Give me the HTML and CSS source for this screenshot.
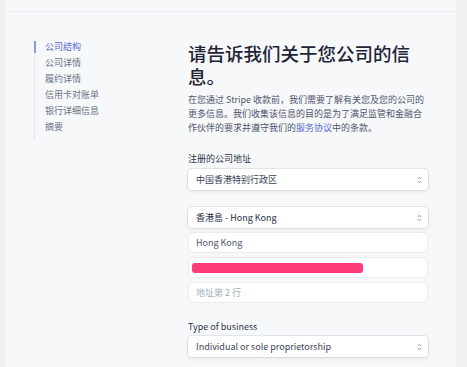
FILE: index.html
```html
<!DOCTYPE html>
<html lang="zh">
<head>
<meta charset="utf-8">
<link rel="stylesheet" href="styles.css">
</head>
<body>
<div class="frame">
  <div class="topbar"></div>
  <div class="main">
    <nav class="sidebar">
      <a class="nav-item active">公司结构</a>
      <a class="nav-item">公司详情</a>
      <a class="nav-item">履约详情</a>
      <a class="nav-item">信用卡对账单</a>
      <a class="nav-item">银行详细信息</a>
      <a class="nav-item">摘要</a>
    </nav>
    <section class="content">
      <h1 class="title">请告诉我们关于您公司的信息。</h1>
      <p class="intro">在您通过 Stripe 收款前，我们需要了解有关您及您的公司的更多信息。我们收集该信息的目的是为了满足监管和金融合作伙伴的要求并遵守我们的<span class="link">服务协议</span>中的条款。</p>

      <div class="field">
        <div class="label">注册的公司地址</div>
        <div class="select"><span>中国香港特别行政区</span><svg class="chev" width="5" height="8" viewBox="0 0 5 8"><path d="M0.8 3 L2.5 1.2 L4.2 3 M0.8 5 L2.5 6.8 L4.2 5" fill="none" stroke="#8792a2" stroke-width="0.9"/></svg></div>
      </div>

      <div class="group">
        <div class="select strong"><span>香港島 - Hong Kong</span><svg class="chev" width="5" height="8" viewBox="0 0 5 8"><path d="M0.8 3 L2.5 1.2 L4.2 3 M0.8 5 L2.5 6.8 L4.2 5" fill="none" stroke="#8792a2" stroke-width="0.9"/></svg></div>
        <div class="input">Hong Kong</div>
        <div class="input"><span class="redact"></span></div>
        <div class="input placeholder">地址第 2 行</div>
      </div>

      <div class="field business">
        <div class="label">Type of business</div>
        <div class="select"><span>Individual or sole proprietorship</span><svg class="chev" width="5" height="8" viewBox="0 0 5 8"><path d="M0.8 3 L2.5 1.2 L4.2 3 M0.8 5 L2.5 6.8 L4.2 5" fill="none" stroke="#8792a2" stroke-width="0.9"/></svg></div>
      </div>
    </section>
  </div>
</div>
</body>
</html>
```

FILE: styles.css
```css
html, body {
  margin: 0;
  padding: 0;
}
body {
  background: #eff0f2;
  font-family: "Noto Sans CJK SC", "Noto Sans", sans-serif;
  font-size: 9px;
  color: #3c4257;
  width: 467px;
  height: 367px;
  overflow: hidden;
}
.frame {
  margin: 0 11px 0 5px;
  background: #f7f8fa;
  height: 367px;
}
.topbar {
  height: 11px;
  border-bottom: 1px solid #eceef1;
}
.main {
  display: flex;
  padding: 29px 0 0 29px;
}
.sidebar {
  width: 154px;
  display: flex;
  flex-direction: column;
  align-self: flex-start;
  border-left: 1px solid #e3e8ee;
  padding-bottom: 3px;
}
.nav-item {
  display: block;
  height: 16px;
  line-height: 12px;
  padding-left: 10px;
  color: #697386;
  font-size: 9px;
}
.nav-item.active {
  color: #556cd6;
  border-left: 2px solid #8a9ce0;
  margin-left: -1px;
  padding-left: 9px;
  height: 12px;
  margin-bottom: 4px;
}
.content {
  width: 240px;
  margin-left: -1px;
}
.title {
  margin: 1px 0 0 0;
  font-size: 18.5px;
  line-height: 23px;
  font-weight: 500;
  color: #1f2436;
  width: 236px;
}
.intro {
  margin: 5px 0 0 0;
  font-size: 9px;
  line-height: 14px;
  color: #4f566b;
}
.link {
  color: #556cd6;
}
.field {
  margin-top: 18px;
}
.label {
  font-size: 9px;
  line-height: 12px;
  font-weight: 400;
  color: #2f3548;
  margin-bottom: 4px;
}
.select {
  height: 21px;
  box-sizing: border-box;
  background: #fff;
  border-radius: 4px;
  box-shadow: 0 0 0 1px rgba(60, 66, 87, 0.10), 0 2px 4px rgba(60, 66, 87, 0.08);
  display: flex;
  align-items: center;
  justify-content: space-between;
  padding: 0 6px 0 8px;
  color: #3c4257;
}
.select.strong span {
  color: #2a2f45;
}
.chev {
  display: block;
}
.group {
  margin-top: 17px;
  display: flex;
  flex-direction: column;
  gap: 4px;
}
.input {
  height: 21px;
  box-sizing: border-box;
  background: #fff;
  border: 1px solid #e9ecf0;
  border-radius: 4px;
  display: flex;
  align-items: center;
  padding: 0 7px;
  color: #4f566b;
}
.input.placeholder {
  color: #a3acb9;
}
.redact {
  display: block;
  width: 171px;
  height: 10px;
  margin-left: -4px;
  border-radius: 3px;
  background: #fd3b78;
}
.business {
  margin-top: 18px;
}
.business .label {
  margin-bottom: 3px;
}
```
